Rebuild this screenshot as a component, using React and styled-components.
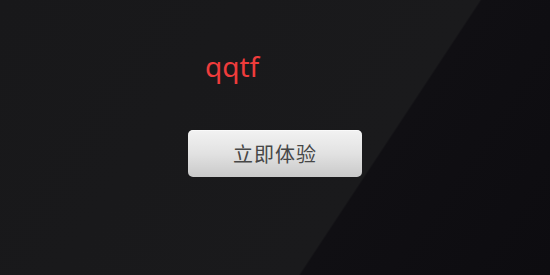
import React from "react"
import styled, { createGlobalStyle } from "styled-components"

const GlobalStyle = createGlobalStyle`
  html, body {
    margin: 0;
    padding: 0;
    background: #0f0e12;
  }
`

const Screen = styled.div`
  width: 550px;
  height: 275px;
  display: flex;
  flex-direction: column;
  align-items: center;
  background: linear-gradient(
    123.4deg,
    #18181a 0%,
    #1a1a1c 65.6%,
    #100f13 65.9%,
    #0d0c10 100%
  );
  font-family: "Noto Sans", "Noto Sans CJK SC", sans-serif;
  overflow: hidden;
`

const Content = styled.div`
  width: 174px;
  display: flex;
  flex-direction: column;
`

const Title = styled.div`
  margin: 46px 0 0 17px;
  height: 40px;
  font-size: 28px;
  line-height: 40px;
  color: #ef3c3c;
`

const StartButton = styled.button`
  margin-top: 44px;
  width: 174px;
  height: 47px;
  border: none;
  border-radius: 5px;
  background: linear-gradient(#f2f2f2, #e2e2e2 50%, #c9c9c9);
  box-shadow: inset 0 1px 0 rgba(255, 255, 255, 0.6);
  color: #474747;
  font-family: "Noto Sans CJK SC", sans-serif;
  font-size: 20px;
  letter-spacing: 1px;
  padding: 0;
  cursor: pointer;
`

const App = () => {
  return (
    <>
      <GlobalStyle />
      <Screen>
        <Content>
          <Title>qqtf</Title>
          <StartButton>立即体验</StartButton>
        </Content>
      </Screen>
    </>
  )
}

export default App
